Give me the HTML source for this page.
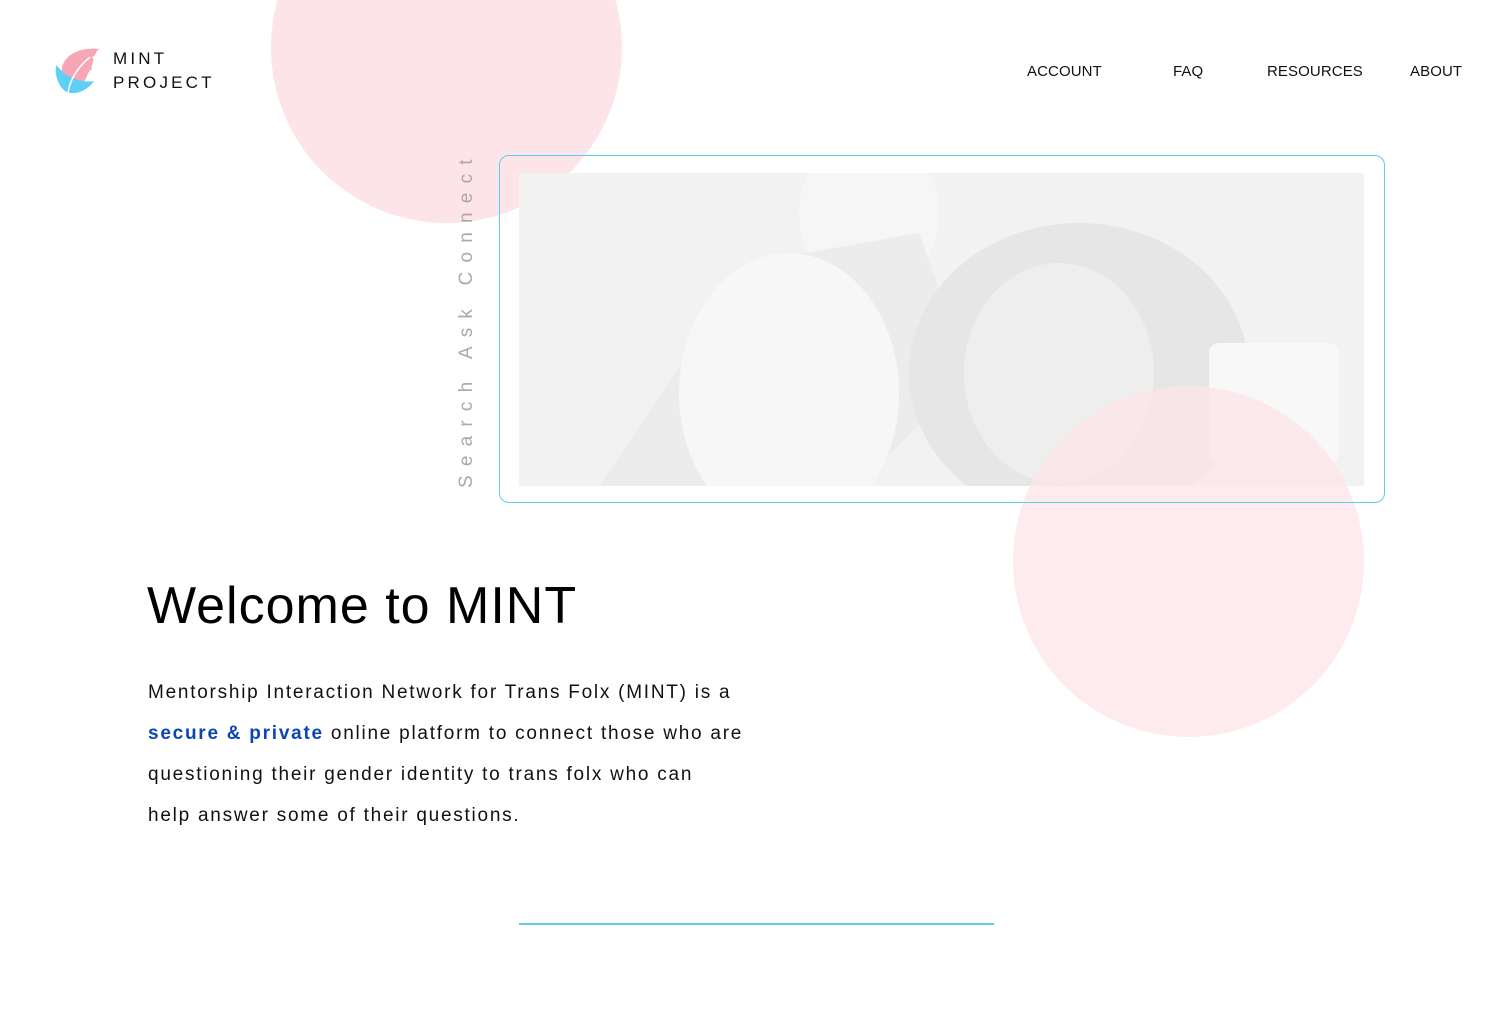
<!DOCTYPE html>
<html><head><style>
*{margin:0;padding:0;box-sizing:border-box}
body{width:1512px;height:1009px;background:#fff;position:relative;overflow:hidden;font-family:"Liberation Sans",sans-serif;color:#111}
.abs{position:absolute}
.circ{border-radius:50%;background:#fce4e8;width:351px;height:351px}
nav a{position:absolute;top:63px;font-size:15px;color:#111;text-decoration:none;letter-spacing:0.1px}
.photo{left:519px;top:173px;width:845px;height:313px;background:#f1f1f1;overflow:hidden}
</style></head><body>
<div class="abs circ" style="left:271px;top:-128px"></div>
<svg class="abs" style="left:52px;top:45px" width="52" height="52" viewBox="0 0 52 52">
<path d="M10 22 C14 8 30 2 48 4 C42 6 46 10 40 12 C44 16 38 20 40 24 C34 28 36 34 30 38 C24 40 16 36 10 30 Z" fill="#f7a6b6"/>
<path d="M4 20 C2 34 10 50 22 48 C30 48 38 42 42 36 C32 38 18 34 10 26 Z" fill="#5fcff5"/>
<path d="M16 48 C18 34 26 22 38 12" stroke="#fff" stroke-width="1.5" fill="none"/>
</svg>
<div class="abs" style="left:113px;top:47px;font-size:17px;letter-spacing:3.2px;line-height:24px">MINT<br>PROJECT</div>
<nav><a style="left:1027px">ACCOUNT</a><a style="left:1173px">FAQ</a><a style="left:1267px">RESOURCES</a><a style="left:1410px">ABOUT</a></nav>
<div class="abs" style="left:456px;top:488px;transform:rotate(-90deg);transform-origin:0 0;font-size:19px;letter-spacing:9.2px;color:#aaa;white-space:nowrap;line-height:22px">Search Ask Connect</div>
<div class="abs photo">
<svg width="845" height="313">
<rect width="845" height="313" fill="#f2f2f2"/>
<ellipse cx="350" cy="40" rx="70" ry="80" fill="#f6f6f6"/>
<path d="M230 90 L400 60 L450 200 L340 313 L80 313 Z" fill="#ececec"/>
<ellipse cx="270" cy="220" rx="110" ry="140" fill="#f7f7f7"/>
<ellipse cx="560" cy="200" rx="170" ry="150" fill="#e6e6e6"/>
<ellipse cx="540" cy="200" rx="95" ry="110" fill="#eeeeee"/>
<rect x="690" y="170" width="130" height="120" rx="10" fill="#f8f8f8"/>
</svg>
</div>
<div class="abs circ" style="left:1013px;top:386px;opacity:0.75"></div>
<div class="abs" style="left:499px;top:155px;width:886px;height:348px;border:1.5px solid #5bcdf0;border-radius:10px"></div>
<h1 class="abs" style="left:147px;top:576px;font-size:52px;font-weight:normal;letter-spacing:1px;color:#000">Welcome to MINT</h1>
<p class="abs" style="left:148px;top:672px;width:660px;font-size:19px;line-height:41px;letter-spacing:1.75px;color:#111">Mentorship Interaction Network for Trans Folx (MINT) is a<br><b style="color:#0a47b3">secure &amp; private</b> online platform to connect those who are<br>questioning their gender identity to trans folx who can<br>help answer some of their questions.</p>
<div class="abs" style="left:519px;top:923px;width:475px;height:1.5px;background:#5bcdf0"></div>
</body></html>
